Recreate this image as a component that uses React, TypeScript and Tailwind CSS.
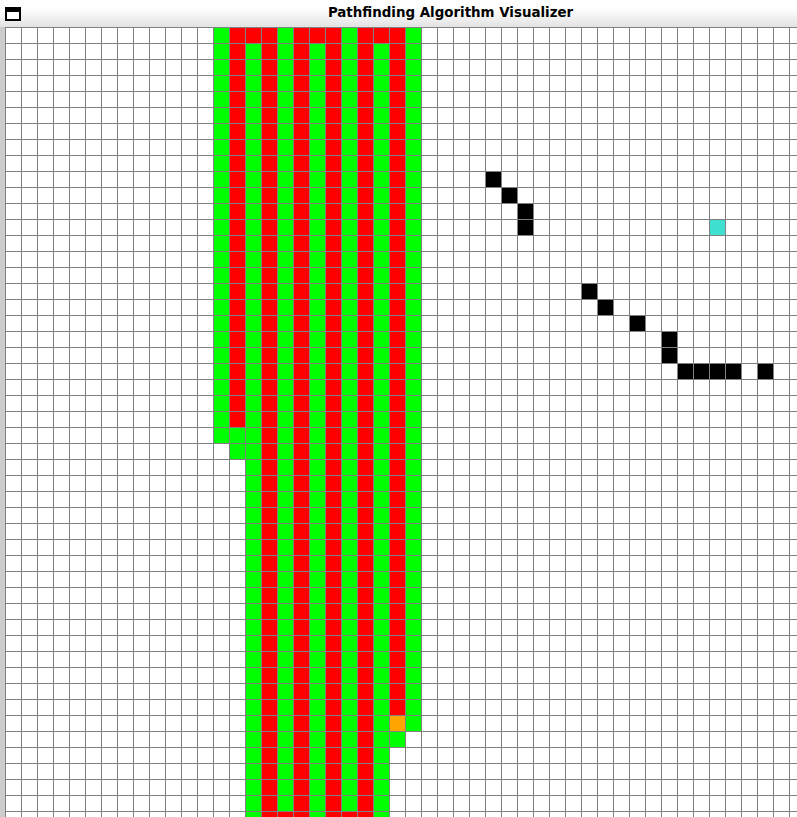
import React from "react";

const ROWS = 50;
const COLS = 50;

type Kind = "W" | "G" | "R" | "B" | "C" | "O";

const black: Array<[number, number]> = [
  [9, 30], [10, 31], [11, 32], [12, 32],
  [16, 36], [17, 37], [18, 39], [19, 41], [20, 41],
  [21, 42], [21, 43], [21, 44], [21, 45], [21, 47],
];

function kindOf(r: number, c: number): Kind {
  if (r === 12 && c === 44) return "C";
  if (black.some(([br, bc]) => br === r && bc === c)) return "B";
  switch (c) {
    case 13:
      return r <= 25 ? "G" : "W";
    case 14:
      if (r <= 24) return "R";
      if (r <= 26) return "G";
      return "W";
    case 15:
    case 19:
    case 23:
      return r === 0 ? "R" : "G";
    case 16:
    case 18:
    case 20:
    case 22:
      return "R";
    case 17:
    case 21:
      return r === 49 ? "R" : "G";
    case 24:
      if (r <= 42) return "R";
      if (r === 43) return "O";
      if (r === 44) return "G";
      return "W";
    case 25:
      return r <= 43 ? "G" : "W";
    default:
      return "W";
  }
}

const cls: Record<Kind, string> = {
  W: "bg-white",
  G: "bg-[#00ff00]",
  R: "bg-[#ff0000]",
  B: "bg-black",
  C: "bg-[#40e0d0]",
  O: "bg-[#ffa500]",
};

export default function App() {
  const cells: React.ReactNode[] = [];
  for (let r = 0; r < ROWS; r++) {
    for (let c = 0; c < COLS; c++) {
      cells.push(<div key={`${r}-${c}`} className={`w-[15px] h-[15px] ${cls[kindOf(r, c)]}`} />);
    }
  }
  return (
    <div className="w-[797px] h-[817px] overflow-hidden bg-white flex flex-col">
      <div className="h-[27px] shrink-0 flex items-start bg-linear-to-b from-white from-30% to-[#e3e3e3]">
        <div className="ml-[5px] mt-[7px] w-[16px] h-[14px] border-2 border-black border-t-[5px] bg-white shrink-0" />
        <div
          className="w-[859px] shrink-0 text-center text-[13.4px] font-bold leading-none pt-[6px] text-black"
          style={{ fontFamily: '"DejaVu Sans", sans-serif' }}
        >
          Pathfinding Algorithm Visualizer
        </div>
      </div>
      <div className="flex flex-1 min-h-0">
        <div className="w-[5px] shrink-0 bg-[#cccccc]" />
        <div className="shrink-0">
          <div className="grid grid-cols-[repeat(50,15px)] gap-px p-px bg-[#808080] w-max">
            {cells}
          </div>
        </div>
      </div>
    </div>
  );
}
